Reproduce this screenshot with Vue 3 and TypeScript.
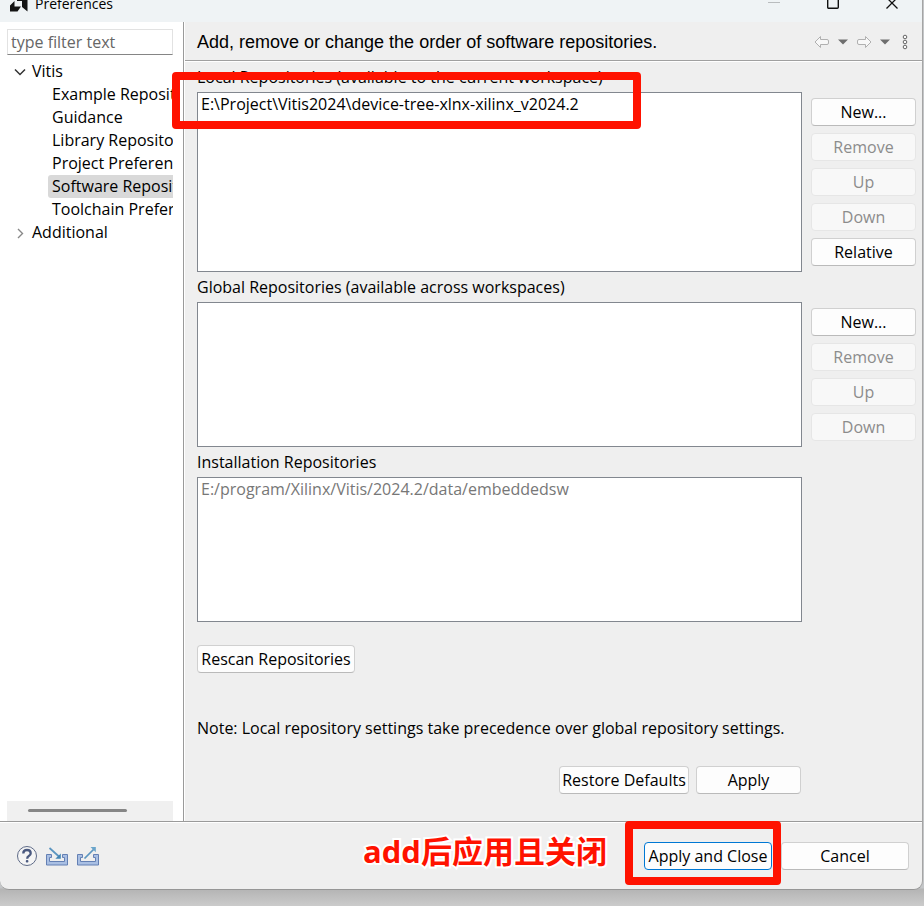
<script setup lang="ts">
import { ref } from 'vue'

interface SideButton { label: string; enabled: boolean }
interface RepoGroup { id: string; title: string; paths: string[]; buttons: SideButton[]; tall?: boolean; marked?: boolean; readonly?: boolean }

const filter = ref('')
const selected = ref('Software Repositories')
const pages: string[] = [
  'Example Repositories',
  'Guidance',
  'Library Repositories',
  'Project Preferences',
  'Software Repositories',
  'Toolchain Preferences',
]

const groups: RepoGroup[] = [
  {
    id: 'local',
    title: 'Local Repositories (available to the current workspace)',
    paths: ['E:\\Project\\Vitis2024\\device-tree-xlnx-xilinx_v2024.2'],
    tall: true,
    marked: true,
    buttons: [
      { label: 'New...', enabled: true },
      { label: 'Remove', enabled: false },
      { label: 'Up', enabled: false },
      { label: 'Down', enabled: false },
      { label: 'Relative', enabled: true },
    ],
  },
  {
    id: 'global',
    title: 'Global Repositories (available across workspaces)',
    paths: [],
    buttons: [
      { label: 'New...', enabled: true },
      { label: 'Remove', enabled: false },
      { label: 'Up', enabled: false },
      { label: 'Down', enabled: false },
    ],
  },
  {
    id: 'installation',
    title: 'Installation Repositories',
    paths: ['E:/program/Xilinx/Vitis/2024.2/data/embeddedsw'],
    readonly: true,
    buttons: [],
  },
]
</script>

<template>
  <div class="desktop">
    <div class="window">
      <header class="titlebar">
        <svg class="logo" width="20" height="14" viewBox="0 0 20 14" aria-hidden="true">
          <path d="M5.500 1v5.500H12L8.500 11.500H1V5.500z" fill="#141414" />
          <path d="M8 0h10.500v11.500L13 7V1H8z" fill="#141414" />
        </svg>
        <span class="caption">Preferences</span>
        <div class="caption-buttons">
          <button type="button" aria-label="Minimize" disabled>
            <svg width="14" height="16" viewBox="0 0 14 16"><path d="M1 2.500h12" stroke="#b9bcbe" fill="none" /></svg>
          </button>
          <button type="button" aria-label="Maximize">
            <svg width="14" height="16" viewBox="0 0 14 16"><rect x="1.700" y="-3" width="10.600" height="11.300" rx="1" stroke="#111" stroke-width="1.400" fill="none" /></svg>
          </button>
          <button type="button" aria-label="Close">
            <svg width="14" height="16" viewBox="0 0 14 16"><path d="M1.500 -2.500l11 11M12.500 -2.500l-11 11" stroke="#111" stroke-width="1.300" fill="none" /></svg>
          </button>
        </div>
      </header>

      <div class="body">
        <nav class="sidebar">
          <input v-model="filter" class="filter" type="text" placeholder="type filter text" aria-label="Filter preferences">
          <div class="tree">
            <button type="button" class="branch">
              <svg width="16" height="16" viewBox="0 0 16 16"><path d="M3 5.500l5 5 5-5" fill="none" stroke="#333" stroke-width="1.500" /></svg>
              Vitis
            </button>
            <button
              v-for="page in pages"
              :key="page"
              type="button"
              class="leaf"
              :class="{ current: page === selected }"
              @click="selected = page"
            >{{ page }}</button>
            <button type="button" class="branch">
              <svg width="16" height="16" viewBox="0 0 16 16"><path d="M6 4l4.500 4.500L6 13" fill="none" stroke="#888" stroke-width="1.400" /></svg>
              Additional
            </button>
          </div>
          <div class="scrollbar"><div class="thumb"></div></div>
        </nav>

        <main class="page">
          <div class="page-header">
            <h1>Add, remove or change the order of software repositories.</h1>
            <div class="history">
              <button type="button" aria-label="Back">
                <svg width="16" height="14" viewBox="0 0 16 14"><path d="M1 7l5.500-5.500v3H13q1.500 0 1.500 1.500v2q0 1.500-1.500 1.500H6.500v3z" fill="#f8f8f8" stroke="#b0b0b0" /></svg>
              </button>
              <button type="button" aria-label="Back history">
                <svg width="10" height="6" viewBox="0 0 10 6"><path d="M0 .5h10L5 5.500z" fill="#6e6e6e" /></svg>
              </button>
              <button type="button" aria-label="Forward">
                <svg width="16" height="14" viewBox="0 0 16 14"><path d="M15 7L9.500 1.500v3H3Q1.500 4.500 1.500 6v2q0 1.500 1.500 1.500h6.500v3z" fill="#f8f8f8" stroke="#b0b0b0" /></svg>
              </button>
              <button type="button" aria-label="Forward history">
                <svg width="10" height="6" viewBox="0 0 10 6"><path d="M0 .5h10L5 5.500z" fill="#6e6e6e" /></svg>
              </button>
              <button type="button" class="more" aria-label="More">
                <svg width="6" height="16" viewBox="0 0 6 16"><g fill="#fafafa" stroke="#666"><circle cx="3" cy="3" r="1.800" /><circle cx="3" cy="8" r="1.800" /><circle cx="3" cy="13" r="1.800" /></g></svg>
              </button>
            </div>
          </div>

          <div class="content">
            <section v-for="group in groups" :key="group.id" class="group">
              <h2 :id="group.id">{{ group.title }}</h2>
              <div class="row">
                <ul class="list" :class="{ tall: group.tall, readonly: group.readonly }" :aria-labelledby="group.id">
                  <li v-for="path in group.paths" :key="path">{{ path }}</li>
                </ul>
                <div class="side">
                  <button v-for="b in group.buttons" :key="b.label" type="button" class="btn" :disabled="!b.enabled">{{ b.label }}</button>
                </div>
                <div v-if="group.marked" class="mark mark-list"></div>
              </div>
            </section>

            <button type="button" class="btn rescan">Rescan Repositories</button>
            <p class="note">Note: Local repository settings take precedence over global repository settings.</p>
            <div class="actions">
              <button type="button" class="btn restore">Restore Defaults</button>
              <button type="button" class="btn apply">Apply</button>
            </div>
          </div>
        </main>
      </div>

      <footer class="footer">
        <div class="tools">
          <button type="button" aria-label="Help">
            <svg width="22" height="22" viewBox="0 0 22 22">
              <circle cx="11" cy="11" r="9.500" fill="#f5f5f5" stroke="#5f6b88" />
              <path d="M7.300 8.500Q7.300 5 11 5t3.700 3.200q0 1.800-1.900 2.900-1.600.9-1.600 2.700" fill="none" stroke="#4b5a80" stroke-width="2.300" />
              <rect x="9.800" y="15" width="2.600" height="2.400" rx="1" fill="#4b5a80" />
            </svg>
          </button>
          <button type="button" aria-label="Import">
            <svg width="24" height="22" viewBox="0 0 24 22">
              <path d="M1.500 9.500h5v3h-2v4h15v-4h-2v-3h5v10.500h-21z" fill="#a9bfe3" stroke="#6480b4" />
              <path d="M4.500 3l10 9" stroke="#5b95c0" stroke-width="1.700" />
              <path d="M15.800 8.500v5.300h-5.500z" fill="#4486b5" />
            </svg>
          </button>
          <button type="button" aria-label="Export">
            <svg width="24" height="22" viewBox="0 0 24 22">
              <path d="M1.500 9.500h5v3h-2v4h15v-4h-2v-3h5v10.500h-21z" fill="#a9bfe3" stroke="#6480b4" />
              <path d="M8.500 13.500l10-10" stroke="#5b95c0" stroke-width="1.700" />
              <path d="M14.500 2h5.300v5.300z" fill="#6aa5cb" />
            </svg>
          </button>
        </div>
        <span class="remark">add后应用且关闭</span>
        <div class="confirm">
          <button type="button" class="btn primary">Apply and Close</button>
          <div class="mark mark-close"></div>
        </div>
        <button type="button" class="btn cancel">Cancel</button>
      </footer>
    </div>
  </div>
</template>

<style>
body {
  margin: 0;
}
</style>

<style scoped>
* {
  box-sizing: border-box;
}
.desktop {
  min-height: 100vh;
  display: flex;
  flex-direction: column;
  padding: 0 1px 16px 0;
  overflow: hidden;
  background: linear-gradient(to top, #cbcbcb, #b4b4b4 17px, #c4c6c8 18px);
  font-family: "Open Sans", "Noto Sans", "Noto Sans CJK SC", sans-serif;
  font-size: 16px;
  line-height: 23px;
  color: #000;
}
button {
  font: inherit;
  color: inherit;
  padding: 0;
  border: 0;
  background: none;
}
svg {
  display: block;
}
.window {
  flex: 1;
  display: flex;
  flex-direction: column;
  background: #efefef;
  border-right: 1px solid #a5a5a5;
  border-bottom: 1px solid #969696;
  border-radius: 0 0 9px 9px;
}
.titlebar {
  height: 22px;
  display: flex;
  align-items: flex-start;
  padding: 0 23px 0 9px;
  background: #eff3f5;
}
.caption {
  margin: -8px auto 0 6px;
  font-size: 14px;
}
.caption-buttons {
  display: flex;
  gap: 45px;
}
.body {
  flex: 1;
  display: flex;
}
.sidebar {
  width: 184px;
  display: flex;
  flex-direction: column;
  padding: 7px 10px 0 7px;
  background: #fff;
  border-right: 1px solid #9a9a9a;
}
.filter {
  width: 100%;
  height: 26px;
  padding: 0 3px;
  font: inherit;
  border: 1px solid #e2e2e2;
  border-bottom-color: #858585;
  background: #fff;
  outline: 0;
}
.filter::placeholder {
  color: #666;
  opacity: 1;
}
.tree {
  display: flex;
  flex-direction: column;
  margin: 5px 0 auto;
  overflow: hidden;
}
.branch,
.leaf {
  height: 23px;
  text-align: left;
  white-space: nowrap;
}
.branch {
  display: flex;
  align-items: center;
  gap: 4px;
  padding-left: 5px;
}
.leaf {
  margin-left: 41px;
  padding-left: 4px;
}
.leaf.current {
  background: #d9d9d9;
  border-radius: 3px 0 0 3px;
}
.scrollbar {
  height: 20px;
  padding: 8px 46px 0 21px;
  background: #f0f0f0;
}
.thumb {
  height: 3px;
  border-radius: 2px;
  background: #868686;
}
.page {
  flex: 1;
  min-width: 0;
  border-left: 1px solid #fff;
}
.page-header {
  height: 39px;
  display: flex;
  align-items: center;
  justify-content: space-between;
  padding: 2px 14px 0 12px;
  border-bottom: 1px solid #a0a0a0;
  box-shadow: 0 1px #fff;
}
h1 {
  margin: 0;
  font-family: "Liberation Sans", sans-serif;
  font-size: 18px;
  font-weight: 400;
}
.history {
  display: flex;
  align-items: center;
  gap: 8px;
}
.more {
  margin-left: 4px;
}
.content {
  padding: 5px 6px 0 12px;
}
.group {
  margin-bottom: 4px;
}
h2 {
  margin: 0 0 3px;
  font-size: 16px;
  font-weight: 400;
  line-height: 23px;
}
.row {
  position: relative;
  display: flex;
  gap: 9px;
}
.list {
  flex: 1;
  min-height: 145px;
  margin: 0;
  padding: 0 3px;
  list-style: none;
  background: #fff;
  border: 1px solid #82878f;
}
.list.tall {
  min-height: 180px;
}
.list.readonly {
  color: #777;
}
.side {
  width: 105px;
  display: flex;
  flex-direction: column;
  gap: 7px;
  padding-top: 6px;
}
.btn {
  height: 28px;
  padding: 0;
  line-height: 26px;
  white-space: nowrap;
  background: #fdfdfd;
  border: 1px solid #d0d0d0;
  border-bottom-color: #bababa;
  border-radius: 4px;
}
.btn:disabled {
  color: #8c8c8c;
  background: #f8f8f8;
  border-color: #e6e6e6;
}
.rescan {
  display: block;
  width: 158px;
  margin-top: 23px;
}
.note {
  margin: 44px 0 26px;
}
.actions {
  display: flex;
  justify-content: flex-end;
  gap: 7px;
  padding-right: 115px;
}
.restore {
  width: 130px;
}
.apply {
  width: 105px;
}
.footer {
  height: 68px;
  display: flex;
  align-items: center;
  padding: 0 13px 0 16px;
  border-top: 1px solid #9a9a9a;
  box-shadow: inset 0 1px #fff;
}
.tools {
  display: flex;
  gap: 7px;
  margin-right: auto;
}
.remark {
  margin-right: 37px;
  padding-bottom: 10px;
  font-family: "Open Sans", "Noto Sans CJK SC", sans-serif;
  font-size: 31px;
  font-weight: 700;
  line-height: 40px;
  color: #ff1200;
  -webkit-text-stroke: 4px #fff;
  paint-order: stroke fill;
}
.confirm {
  position: relative;
  display: flex;
  margin-right: 9px;
}
.primary {
  width: 128px;
  border-color: #0078d4;
}
.cancel {
  width: 128px;
}
.mark {
  position: absolute;
  border: 8px solid #ff1200;
  border-radius: 4px;
  pointer-events: none;
}
.mark-list {
  top: -20px;
  left: -25px;
  width: 469px;
  height: 57px;
}
.mark-close {
  top: -21px;
  left: -19px;
  width: 156px;
  height: 64px;
}
</style>
